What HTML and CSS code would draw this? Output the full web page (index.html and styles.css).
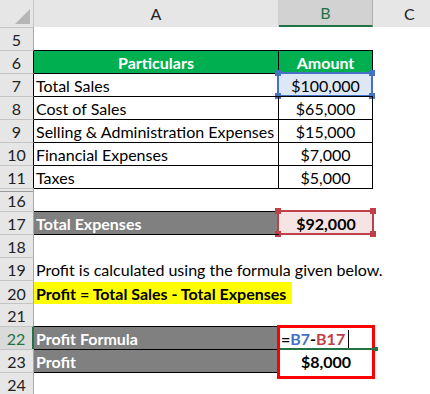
FILE: index.html
```html
<!DOCTYPE html>
<html lang="en">
<head>
    <meta charset="UTF-8">
    <title>Profit Formula</title>
    <link rel="stylesheet" href="styles.css">
</head>
<body>
    <div class="sheet">
        <div class="head">
            <div class="corner">
                <svg width="33" height="27" viewBox="0 0 33 27"><polygon points="15,24 30,9 30,24" fill="#b5b5b5"/></svg>
            </div>
            <div class="col">A</div>
            <div class="col selected">B</div>
            <div class="col last">C</div>
        </div>

        <div class="row">
            <div class="rh">5</div><div class="cell"></div><div class="cell"></div><div class="cell"></div>
        </div>
        <div class="row tbl">
            <div class="rh">6</div>
            <div class="cell green center bold">Particulars</div>
            <div class="cell green center bold">Amount</div>
            <div class="cell"></div>
        </div>
        <div class="row tbl">
            <div class="rh">7</div>
            <div class="cell">Total Sales</div>
            <div class="cell center picked">
                <div class="sel blue"><i class="h tl"></i><i class="h tr"></i><i class="h bl"></i><i class="h br"></i></div>
                <span class="val">$100,000</span>
            </div>
            <div class="cell"></div>
        </div>
        <div class="row tbl">
            <div class="rh">8</div>
            <div class="cell">Cost of Sales</div>
            <div class="cell center">$65,000</div>
            <div class="cell"></div>
        </div>
        <div class="row tbl">
            <div class="rh">9</div>
            <div class="cell">Selling &amp; Administration Expenses</div>
            <div class="cell center">$15,000</div>
            <div class="cell"></div>
        </div>
        <div class="row tbl">
            <div class="rh">10</div>
            <div class="cell">Financial Expenses</div>
            <div class="cell center">$7,000</div>
            <div class="cell"></div>
        </div>
        <div class="row tbl">
            <div class="rh">11</div>
            <div class="cell">Taxes</div>
            <div class="cell center">$5,000</div>
            <div class="cell"></div>
        </div>
        <div class="row closer">
            <div class="rh hidden-above">16</div><div class="cell"></div><div class="cell"></div><div class="cell"></div>
        </div>
        <div class="row">
            <div class="rh">17</div>
            <div class="cell grey bold">Total Expenses</div>
            <div class="cell center bold pink">
                <div class="sel red"><i class="h tl"></i><i class="h tr"></i><i class="h bl"></i><i class="h br"></i></div>
                <span class="val">$92,000</span>
            </div>
            <div class="cell"></div>
        </div>
        <div class="row after-grey">
            <div class="rh">18</div><div class="cell"></div><div class="cell"></div><div class="cell"></div>
        </div>
        <div class="row">
            <div class="rh">19</div>
            <div class="cell spill">Profit is calculated using the formula given below.</div>
            <div class="cell"></div><div class="cell"></div>
        </div>
        <div class="row">
            <div class="rh">20</div>
            <div class="cell spill"><span class="mark bold">Profit = Total Sales - Total Expenses</span></div>
            <div class="cell"></div><div class="cell"></div>
        </div>
        <div class="row">
            <div class="rh">21</div><div class="cell"></div><div class="cell"></div><div class="cell"></div>
        </div>
        <div class="row">
            <div class="rh active">22</div>
            <div class="cell grey bold">Profit Formula</div>
            <div class="cell bold editing">
                <div class="result-box"></div>
                <span class="formula">=<span class="ref-b7">B7</span>-<span class="ref-b17">B17</span></span><span class="caret"></span>
                <div class="edit-line"></div>
            </div>
            <div class="cell"></div>
        </div>
        <div class="row">
            <div class="rh">23</div>
            <div class="cell grey bold">Profit</div>
            <div class="cell center bold">$8,000</div>
            <div class="cell"></div>
        </div>
        <div class="row after-grey">
            <div class="rh">24</div><div class="cell"></div><div class="cell"></div><div class="cell"></div>
        </div>
    </div>
</body>
</html>
```

FILE: styles.css
```css
body {
    margin: 0;
    background: #ffffff;
    font-family: Lato, "Open Sans", sans-serif;
    font-size: 16px;
    color: #000000;
}
.sheet {
    width: 430px;
    overflow: hidden;
}
.head,
.row {
    display: grid;
    grid-template-columns: 34px 245px 94px 57px;
}
.head {
    height: 27px;
    background: #e6e6e6;
}
.corner {
    border-right: 1px solid #c8c8c8;
}
.corner svg {
    display: block;
}
.col {
    display: flex;
    align-items: center;
    justify-content: center;
    color: #222222;
    border-right: 1px solid #cfcfcf;
    padding-bottom: 1px;
}
.col.last {
    border-right: none;
    justify-content: flex-start;
    padding-left: 31px;
}
.col.selected {
    background: #d2d2d2;
    border-right: 1px solid #b0b0b0;
    border-bottom: 2px solid #217346;
    color: #217346;
}
.row {
    height: 23px;
}
.rh {
    box-sizing: border-box;
    background: #e6e6e6;
    border-top: 1px solid #c4c4c4;
    border-right: 1px solid #a6a6a6;
    display: flex;
    align-items: center;
    justify-content: center;
    color: #222222;
    padding-top: 1px;
}
.rh.hidden-above {
    box-shadow: inset 0 2px 0 #e6e6e6, inset 0 3px 0 #9a9a9a;
}
.rh.active {
    background: #dadada;
    border-right: 2px solid #217346;
    color: #217346;
}
.cell {
    box-sizing: border-box;
    position: relative;
    border-top: 1px solid transparent;
    display: flex;
    align-items: center;
    padding: 1px 2px 0;
    white-space: nowrap;
}
.center {
    justify-content: center;
}
.bold {
    font-weight: bold;
}
.tbl .rh {
    border-right-color: #000000;
}
.tbl .cell:nth-child(2),
.tbl .cell:nth-child(3) {
    border-top-color: #000000;
    border-right: 1px solid #000000;
}
.closer .cell:nth-child(2),
.closer .cell:nth-child(3) {
    border-top-color: #000000;
}
.green {
    background: #00b050;
    color: #ffffff;
}
.grey {
    background: #808080;
    color: #ffffff;
    border-top-color: #000000;
}
.after-grey .cell:nth-child(2) {
    border-top-color: #000000;
}
.spill {
    overflow: visible;
    z-index: 1;
}
.mark {
    background: #ffff00;
    margin-left: -2px;
    padding: 2px 6px 1px 2px;
}
.picked {
    background: #dde7f5;
}
.pink {
    background: #f6e4e4;
}
.val {
    position: relative;
}
.sel {
    position: absolute;
    left: -2px;
    right: -1px;
    top: -2px;
    bottom: -1px;
    border: 2px solid;
}
.sel.blue {
    border-color: #4472c4;
}
.sel.red {
    border-color: #c0404a;
}
.h {
    position: absolute;
    width: 6px;
    height: 6px;
    background: inherit;
}
.sel.blue .h {
    background: #4472c4;
}
.sel.red .h {
    background: #c0404a;
}
.h.tl { left: -4px; top: -4px; }
.h.tr { right: -4px; top: -4px; }
.h.bl { left: -4px; bottom: -4px; }
.h.br { right: -4px; bottom: -4px; }
.editing {
    padding-left: 2px;
}
.result-box {
    position: absolute;
    left: -2px;
    right: -2px;
    top: -2px;
    height: 48px;
    border: 3px solid #ff0000;
    z-index: 2;
}
.formula {
    position: relative;
}
.ref-b7 {
    color: #4472c4;
}
.ref-b17 {
    color: #c0404a;
}
.caret {
    display: inline-block;
    width: 1px;
    height: 18px;
    background: #000000;
    margin-left: 3px;
}
.edit-line {
    position: absolute;
    left: 1px;
    right: -2px;
    bottom: -1px;
    height: 2px;
    background: #217346;
    z-index: 3;
}
.edit-line::after {
    content: "";
    position: absolute;
    right: -3px;
    top: -1px;
    width: 4px;
    height: 4px;
    background: #217346;
}
```
